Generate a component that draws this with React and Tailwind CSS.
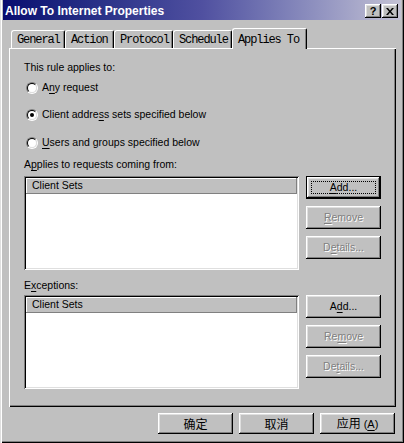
import React from "react";

const raised =
  "shadow-[inset_-1px_-1px_#000,inset_1px_1px_#fff,inset_-2px_-2px_#808080,inset_2px_2px_#dfdfdf]";
const sunken =
  "shadow-[inset_1px_1px_#808080,inset_-1px_-1px_#fff,inset_2px_2px_#000,inset_-2px_-2px_#dfdfdf]";
const sans = "font-['Liberation_Sans',Arial,sans-serif]";
const disabled = "text-[#808080] [text-shadow:1px_1px_0_#fff]";

function U({ children }) {
  return <span className="underline underline-offset-[2px]">{children}</span>;
}

function Radio({ checked, children }) {
  return (
    <div className="flex items-center h-[16px] ml-[2px] gap-[4px]">
      <span className="w-[12px] h-[12px] rounded-full border border-t-[#808080] border-l-[#808080] border-b-white border-r-white flex items-center justify-center">
        <span className="w-[10px] h-[10px] rounded-full border border-t-black border-l-black border-b-[#dfdfdf] border-r-[#dfdfdf] bg-white flex items-center justify-center">
          {checked && <span className="w-[4px] h-[4px] rounded-full bg-black" />}
        </span>
      </span>
      <span>{children}</span>
    </div>
  );
}

function Button({ children, isDefault, off, className = "" }) {
  if (isDefault) {
    return (
      <div className={"relative w-[75px] h-[23px] border border-black bg-[#c0c0c0] flex items-center justify-center " + raised + " " + className}>
        <span className="absolute inset-[4px] border border-dotted border-black" />
        <span>{children}</span>
      </div>
    );
  }
  return (
    <div className={"w-[75px] h-[23px] bg-[#c0c0c0] flex items-center justify-center " + raised + " " + className}>
      <span className={off ? disabled : ""}>{children}</span>
    </div>
  );
}

function ListBlock({ first }) {
  return (
    <div className="flex gap-[7px]">
      <div className={"w-[275px] h-[94px] bg-white p-[2px] " + sunken}>
        <div className={"h-[16px] bg-[#c0c0c0] pl-[6px] flex items-center shadow-[inset_-1px_-1px_#808080,inset_1px_1px_#fff]"}>
          Client Sets
        </div>
      </div>
      <div className="flex flex-col gap-[7px]">
        {first ? (
          <>
            <Button isDefault><U>A</U>dd...</Button>
            <Button off><U>R</U>emove</Button>
            <Button off>D<U>e</U>tails...</Button>
          </>
        ) : (
          <>
            <Button>A<U>d</U>d...</Button>
            <Button off>Re<U>m</U>ove</Button>
            <Button off>De<U>t</U>ails...</Button>
          </>
        )}
      </div>
    </div>
  );
}

const tabs = [
  { label: "General", w: 54 },
  { label: "Action", w: 49 },
  { label: "Protocol", w: 59 },
  { label: "Schedule", w: 59 },
];

export default function App() {
  return (
    <div className={"w-[404px] h-[443px] bg-[#c0c0c0] px-[3px] flex flex-col text-black shadow-[inset_1px_0_#dfdfdf,inset_2px_0_#fff,inset_-1px_-1px_#000,inset_-2px_-2px_#808080] " + sans}>
      {/* title bar */}
      <div className="h-[20px] w-[398px] flex items-start justify-between bg-gradient-to-r from-[#0a0c70] via-[#5050a0] to-[#c4c2d4] pl-[2px] pr-[3px]">
        <span className="mt-[5px] leading-[13px] text-[12px] font-bold text-white whitespace-nowrap">
          Allow To Internet Properties
        </span>
        <div className="flex gap-[1px] mt-[4px]">
          <div className={"w-[16px] h-[14px] bg-[#c0c0c0] flex items-center justify-center text-[11px] font-bold leading-none " + raised}>?</div>
          <div className={"w-[16px] h-[14px] bg-[#c0c0c0] flex items-center justify-center " + raised}>
            <svg width="8" height="7" viewBox="0 0 8 7">
              <path d="M0 0h2l2 2.5L6 0h2L5 3.5 8 7H6L4 4.5 2 7H0l3-3.5z" fill="#000" />
            </svg>
          </div>
        </div>
      </div>

      <div className="pl-[6px] flex flex-col">
        {/* tabs */}
        <div className="mt-[8px] h-[20px] flex items-end pl-[2px] font-['Liberation_Mono',monospace] text-[12px] tracking-[-1.1px]">
          {tabs.map((t) => (
            <div
              key={t.label}
              style={{ width: t.w }}
              className="h-[18px] border-t border-l border-white rounded-tl-[3px] rounded-tr-[2px] border-r border-r-black shadow-[inset_-1px_0_#808080] flex items-center pl-[5px]"
            >
              {t.label}
            </div>
          ))}
          <div className="relative z-10 -mb-px w-[75px] h-[21px] bg-[#c0c0c0] border-t border-l border-white rounded-tl-[3px] rounded-tr-[2px] border-r border-r-black shadow-[inset_-1px_0_#808080] flex items-start pt-[2px] pl-[5px]">
            Applies To
          </div>
        </div>

        {/* panel */}
        <div className="w-[387px] h-[359px] pl-[15px] pt-[13px] shadow-[inset_1px_1px_#fff,inset_-1px_-1px_#000,inset_-2px_-2px_#808080] text-[10.5px] flex flex-col">
          <div className="h-[14px] flex items-center">This rule applies to:</div>
          <div className="mt-[5px]">
            <Radio>A<U>n</U>y request</Radio>
          </div>
          <div className="mt-[11px]">
            <Radio checked>Client addre<U>s</U>s sets specified below</Radio>
          </div>
          <div className="mt-[12px]">
            <Radio><U>U</U>sers and groups specified below</Radio>
          </div>
          <div className="mt-[7px] h-[14px] flex items-center">A<U>p</U>plies to requests coming from:</div>
          <div className="mt-[4px]">
            <ListBlock first />
          </div>
          <div className="mt-[9px] h-[14px] flex items-center">E<U>x</U>ceptions:</div>
          <div className="mt-[2px]">
            <ListBlock />
          </div>
        </div>

        {/* bottom buttons */}
        <div className="w-[387px] mt-[6px] flex justify-end gap-[6px] pr-px font-['Noto_Sans_CJK_SC',sans-serif] text-[12px]">
          <Button className="!h-[21px]">确定</Button>
          <Button className="!h-[21px]">取消</Button>
          <Button className="!h-[21px]">
            应用<span className={"ml-[3px] text-[11px] " + sans}>(<U>A</U>)</span>
          </Button>
        </div>
      </div>
    </div>
  );
}
